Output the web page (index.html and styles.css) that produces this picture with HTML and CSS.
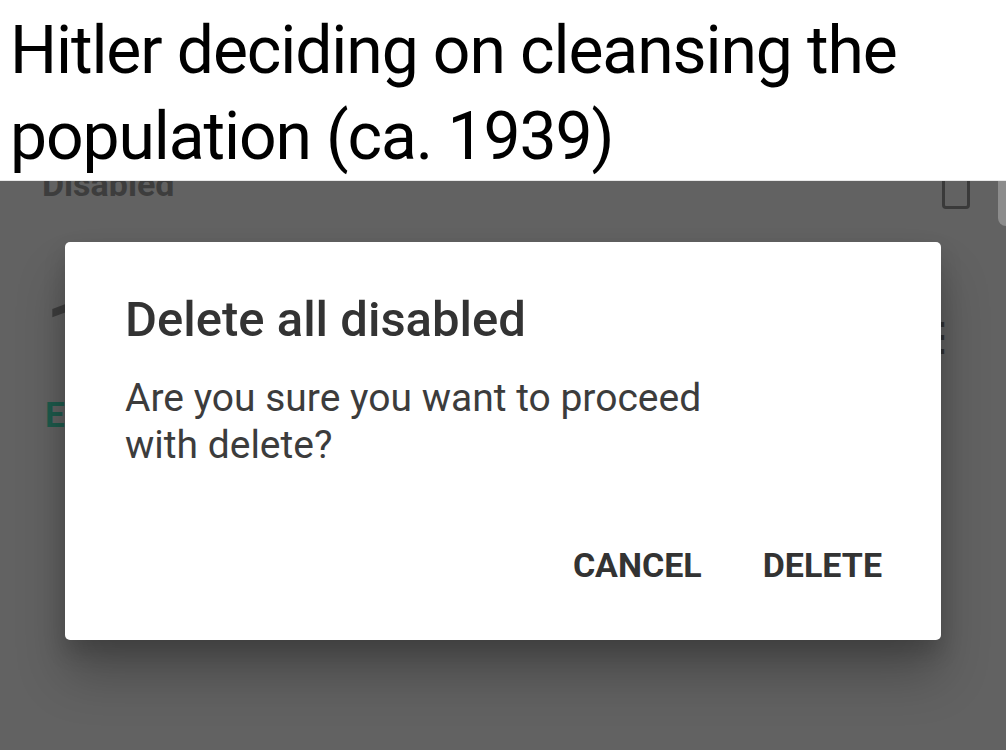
FILE: index.html
```html
<!DOCTYPE html>
<html lang="en">
<head>
<meta charset="utf-8">
<title>Delete all disabled</title>
<link rel="stylesheet" href="styles.css">
</head>
<body>
<header class="caption">
  <h1>Hitler deciding on cleansing the population (ca. 1939)</h1>
</header>
<main class="screen">
  <div class="app">
    <div class="row-top">
      <span class="label">Disabled</span>
      <span class="checkbox"></span>
    </div>
    <div class="row-mid">
      <span class="big">1</span>
      <span class="dots">⋮</span>
    </div>
    <div class="row-link"><span class="link">EDIT</span></div>
  </div>
  <div class="scrollbar"></div>
  <div class="scrim">
    <section class="dialog">
      <h2 class="title">Delete all disabled</h2>
      <p class="message">Are you sure you want to proceed with delete?</p>
      <div class="actions">
        <button class="btn">CANCEL</button>
        <button class="btn">DELETE</button>
      </div>
    </section>
  </div>
</main>
</body>
</html>
```
FILE: styles.css
```css
* { box-sizing: border-box; }
html, body { margin: 0; padding: 0; }
body {
  width: 1006px;
  height: 750px;
  overflow: hidden;
  background: #616161;
  font-family: Roboto, "Noto Sans", "Liberation Sans", sans-serif;
}
.caption {
  height: 181px;
  background: #fff;
  padding: 8px 0 0 10px;
  border-bottom: 1px solid #e8e8e8;
}
.caption h1 {
  margin: 0;
  font-weight: 400;
  font-size: 66px;
  line-height: 86px;
  color: #000;
  width: 960px;
  letter-spacing: -1.1px;
}
.screen {
  position: relative;
  height: 569px;
  background: #626262;
  overflow: hidden;
}
.row-top {
  height: 30px;
  margin-top: -12px;
  display: flex;
  align-items: flex-end;
  justify-content: space-between;
  padding: 0 36px 0 42px;
}
.label {
  font-size: 34px;
  font-weight: 700;
  color: #3d3d3d;
  line-height: 30px;
}
.checkbox {
  width: 28px;
  height: 40px;
  border: 3px solid #3a3a3a;
  border-radius: 4px;
  margin-bottom: -10px;
}
.row-mid {
  display: flex;
  justify-content: space-between;
  padding: 88px 44px 0 44px;
  height: 166px;
}
.big {
  font-size: 100px;
  line-height: 100px;
  height: 100px;
  color: #3e3e3e;
  font-weight: 400;
}
.dots {
  font-size: 40px;
  color: #333;
  line-height: 40px;
  margin-top: 30px;
}
.row-link { padding: 30px 0 0 45px; }
.link {
  font-size: 35px;
  font-weight: 700;
  color: #1e5b4c;
}
.scrollbar {
  position: absolute;
  right: 0;
  top: 0;
  width: 8px;
  height: 45px;
  background: #8c8c8c;
  border-bottom-left-radius: 8px;
}
.scrim {
  position: absolute;
  inset: 0;
  padding: 61px 65px 0 65px;
}
.dialog {
  width: 876px;
  height: 398px;
  background: #fff;
  border-radius: 5px;
  padding: 50px 59px 0 60px;
  box-shadow: 0 36px 50px rgba(0, 0, 0, 0.24), 0 12px 22px rgba(0, 0, 0, 0.16);
  display: flex;
  flex-direction: column;
}
.title {
  margin: 0;
  font-size: 49px;
  font-weight: 500;
  line-height: 56px;
  color: #333;
}
.message {
  margin: 27px 0 0 0;
  font-size: 39px;
  line-height: 47px;
  color: #3c3c3c;
  width: 600px;
}
.actions {
  margin-top: 76px;
  display: flex;
  justify-content: flex-end;
  gap: 61px;
}
.btn {
  border: 0;
  background: none;
  padding: 0;
  font-family: inherit;
  font-size: 34px;
  font-weight: 700;
  line-height: 40px;
  color: #333;
}
```
